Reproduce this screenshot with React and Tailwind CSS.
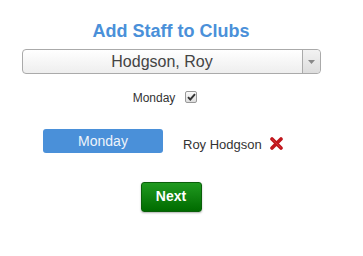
export default function App() {
  return (
    <div className="w-[363px] h-[256px] bg-white font-['Liberation_Sans',Arial,sans-serif] text-[#333]">
      <div className="w-[342px] flex flex-col items-center pt-[21px]">
        <h1 className="text-[18px] leading-[20px] font-bold text-[#4a90d9]">Add Staff to Clubs</h1>

        {/* staff picker */}
        <div className="mt-[8px] w-[299px] h-[25px] flex rounded-[4px] border border-[#aaa] bg-gradient-to-b from-white to-[#eee]">
          <div className="flex-1 flex items-center justify-center text-[16px] text-[#444]">Hodgson, Roy</div>
          <div className="w-[18px] border-l border-[#aaa] flex items-center justify-center bg-gradient-to-b from-[#f2f2f2] to-[#ddd] rounded-r-[4px]">
            <svg width="7" height="4" viewBox="0 0 7 4"><path d="M0 0h7L3.5 4z" fill="#888" /></svg>
          </div>
        </div>

        <label className="mt-[15px] pr-[12px] flex items-center gap-[10px] text-[12px] leading-[14px] text-[#333]">
          <span className="mt-[2px]">Monday</span>
          <span className="w-[12px] h-[12px] rounded-[2px] border border-[#999] bg-gradient-to-b from-[#fafafa] to-[#ddd] flex items-center justify-center">
            <svg width="9" height="8" viewBox="0 0 9 8"><path d="M1 4.2l2.3 2.3L8 1.2" stroke="#333" strokeWidth="1.9" fill="none" /></svg>
          </span>
        </label>

        <div className="mt-[23px] w-full flex items-center pl-[43px]">
          <div className="w-[120px] h-[24px] rounded-[3px] bg-[#4a90d9] text-[#eef4fb] text-[14px] flex items-center justify-center">Monday</div>
          <span className="ml-[20px] text-[13px] text-[#333] mt-[7px]">Roy Hodgson</span>
          <svg className="ml-[8px] mt-[5px]" width="13" height="13" viewBox="0 0 13 13">
            <path d="M2 2L11 11M11 2L2 11" stroke="#c0161c" strokeWidth="3.6" strokeLinecap="round" />
            <path d="M2.5 2.5L10.5 10.5" stroke="#e0454a" strokeWidth="1" strokeLinecap="round" opacity="0.6" />
          </svg>
        </div>

        <button className="mt-[27px] w-[61px] h-[30px] rounded-[3px] bg-gradient-to-b from-[#1f9a1f] to-[#006b00] border border-[#0a5f0a] text-white font-bold text-[14px] shadow-[0_1px_2px_rgba(0,0,0,0.3)]">Next</button>
      </div>
    </div>
  );
}
